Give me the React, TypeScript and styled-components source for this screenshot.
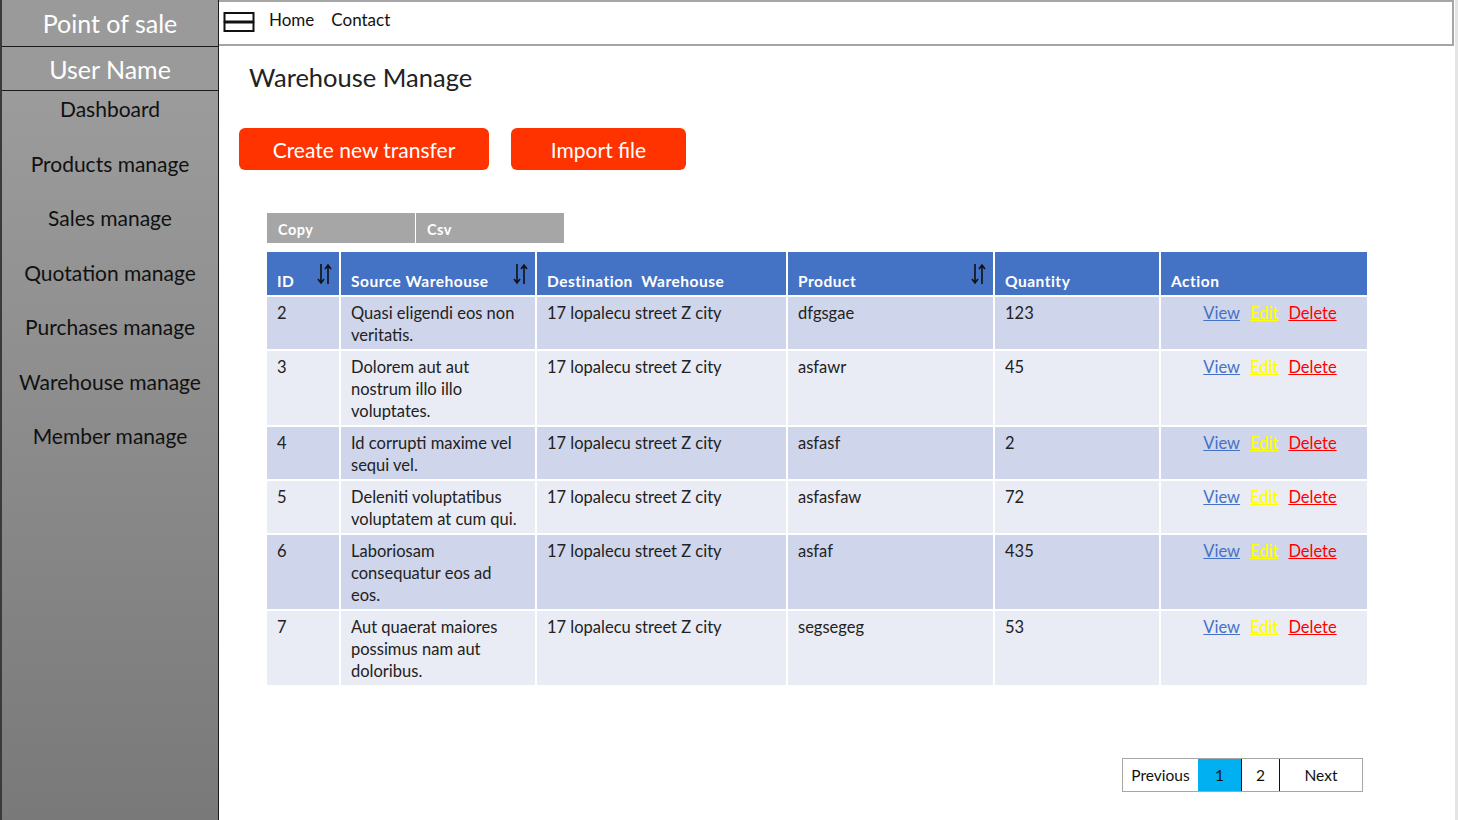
import React from 'react';
import styled, { createGlobalStyle } from 'styled-components';

const GlobalStyle = createGlobalStyle`
  html, body { margin: 0; padding: 0; }
  body { font-family: Lato, "Open Sans", "Liberation Sans", sans-serif; background: #fff; }
`;

const Page = styled.div`
  display: flex;
  height: 820px;
  width: 1458px;
  overflow: hidden;
`;

const Sidebar = styled.aside`
  width: 216px;
  flex: none;
  border-left: 2px solid #3a3a3a;
  border-right: 1px solid #1a1a1a;
  background: linear-gradient(#a0a0a0, #797979);
  display: flex;
  flex-direction: column;
`;

const SideHead = styled.div<{ h: number }>`
  height: ${p => p.h}px;
  border-bottom: 1px solid #1a1a1a;
  color: #fff;
  font-size: 25px;
  display: flex;
  align-items: center;
  justify-content: center;
  background: #9a9a9a;
`;

const MenuItem = styled.div`
  height: 54.5px;
  padding-top: 6px;
  box-sizing: border-box;
  text-align: center;
  font-size: 21px;
  line-height: 24px;
  color: #111;
`;

const Main = styled.main`
  flex: 1;
  display: flex;
  flex-direction: column;
  border-right: 3px solid #e4e4e4;
`;

const TopBar = styled.header`
  border: 2px solid #a6a6a6;
  border-left: none;
  margin-right: 1px;
  display: flex;
  align-items: flex-start;
  padding: 8px 0 0 4px;
  height: 34px;
`;

const NavLink = styled.a`
  font-size: 17px;
  color: #111;
  margin-left: 17px;
  line-height: 20px;
  &:first-of-type { margin-left: 14px; }
`;

const Content = styled.div`
  padding: 16px 0 0 20px;
  display: flex;
  flex-direction: column;
`;

const Title = styled.h1`
  font-weight: 400;
  font-size: 25.5px;
  color: #222;
  margin: 0 0 0 10px;
  line-height: 30px;
`;

const ButtonRow = styled.div`
  display: flex;
  gap: 22px;
  margin-top: 36px;
`;

const RedButton = styled.button<{ w: number }>`
  width: ${p => p.w}px;
  height: 42px;
  background: #ff3300;
  color: #fff;
  border: none;
  border-radius: 6px;
  font-family: inherit;
  font-size: 21px;
  padding: 0;
`;

const TableWrap = styled.div`
  margin: 43px 0 0 28px;
  width: 1102px;
`;

const ExportRow = styled.div`
  display: flex;
  gap: 1px;
  margin-bottom: 9px;
`;

const ExportBtn = styled.div`
  width: 148px;
  height: 30px;
  background: #a6a6a6;
  color: #fff;
  font-weight: 700;
  font-size: 14.5px;
  letter-spacing: 0.5px;
  padding: 8px 0 0 11px;
  box-sizing: border-box;
`;

const Table = styled.table`
  border-collapse: collapse;
  width: 1102px;
  margin-left: -2px;
  table-layout: fixed;
`;

const Th = styled.th<{ w: number }>`
  box-sizing: border-box;
  width: ${p => p.w}px;
  height: 44px;
  background: #4472c4;
  color: #fff;
  font-weight: 700;
  font-size: 15.5px;
  letter-spacing: 0.5px;
  text-align: left;
  vertical-align: bottom;
  padding: 0 6px 5px 10px;
  border: 2px solid #fff;
  border-top: none;
  position: relative;
  white-space: nowrap;
`;

const SortIcon = styled.svg`
  position: absolute;
  right: 6px;
  top: 10px;
`;

const Tr = styled.tr<{ odd: boolean }>`
  background: ${p => (p.odd ? '#cfd5ea' : '#e9ebf5')};
`;

const Td = styled.td`
  border: 2px solid #fff;
  vertical-align: top;
  padding: 5px 14px 3px 10px;
  font-size: 16.5px;
  line-height: 22px;
  color: #222;
`;

const ActionCell = styled(Td)`
  text-align: center;
  padding: 5px 8px 3px 20px;
`;

const Act = styled.a<{ c: string }>`
  color: ${p => p.c};
  text-decoration: underline;
  margin: 0 5px;
`;

const Pager = styled.div`
  display: flex;
  align-self: flex-end;
  margin: 71px 92px 0 0;
  border: 1px solid #a6a6a6;
  height: 32px;
`;

const PageBtn = styled.div<{ w: number; active?: boolean; divide?: boolean }>`
  width: ${p => p.w}px;
  display: flex;
  align-items: center;
  justify-content: center;
  font-size: 15.5px;
  color: #111;
  background: ${p => (p.active ? '#00b0f0' : '#fff')};
  border-left: ${p => (p.divide ? '1px solid #111' : 'none')};
`;

const Sort = () => (
  <SortIcon width="16" height="24" viewBox="0 0 16 24">
    <path d="M4 2 V21 M1 17 L4 21 L7 17" stroke="#111" strokeWidth="1.6" fill="none" />
    <path d="M11 22 V3 M8 7 L11 3 L14 7" stroke="#111" strokeWidth="1.6" fill="none" />
  </SortIcon>
);

const Burger = () => (
  <svg width="32" height="24" viewBox="0 0 32 24">
    <rect x="1.5" y="3" width="29" height="8.5" fill="none" stroke="#111" strokeWidth="2" />
    <rect x="1.5" y="12.5" width="29" height="8.5" fill="none" stroke="#111" strokeWidth="2" />
  </svg>
);

const menu = ['Dashboard', 'Products manage', 'Sales manage', 'Quotation manage', 'Purchases manage', 'Warehouse manage', 'Member manage'];

const rows = [
  { id: 2, src: 'Quasi eligendi  eos non veritatis.', product: 'dfgsgae', qty: 123 },
  { id: 3, src: 'Dolorem aut aut nostrum illo illo voluptates.', product: 'asfawr', qty: 45 },
  { id: 4, src: 'Id corrupti maxime vel sequi vel.', product: 'asfasf', qty: 2 },
  { id: 5, src: 'Deleniti voluptatibus voluptatem at cum qui.', product: 'asfasfaw', qty: 72 },
  { id: 6, src: 'Laboriosam consequatur eos ad eos.', product: 'asfaf', qty: 435 },
  { id: 7, src: 'Aut quaerat maiores possimus nam aut doloribus.', product: 'segsegeg', qty: 53 },
];

export default function App() {
  return (
    <>
      <GlobalStyle />
      <Page>
        <Sidebar>
          <SideHead h={46}>Point of sale</SideHead>
          <SideHead h={43}>User Name</SideHead>
          {menu.map(m => (
            <MenuItem key={m}>{m}</MenuItem>
          ))}
        </Sidebar>
        <Main>
          <TopBar>
            <Burger />
            <NavLink>Home</NavLink>
            <NavLink>Contact</NavLink>
          </TopBar>
          <Content>
            <Title>Warehouse Manage</Title>
            <ButtonRow>
              <RedButton w={250}>Create new transfer</RedButton>
              <RedButton w={175}>Import file</RedButton>
            </ButtonRow>
            <TableWrap>
              <ExportRow>
                <ExportBtn>Copy</ExportBtn>
                <ExportBtn>Csv</ExportBtn>
              </ExportRow>
              <Table>
                <thead>
                  <tr>
                    <Th w={74}>ID<Sort /></Th>
                    <Th w={196}>Source Warehouse<Sort /></Th>
                    <Th w={251}>Destination&nbsp; Warehouse</Th>
                    <Th w={207}>Product<Sort /></Th>
                    <Th w={166}>Quantity</Th>
                    <Th w={208}>Action</Th>
                  </tr>
                </thead>
                <tbody>
                  {rows.map((r, i) => (
                    <Tr key={r.id} odd={i % 2 === 0}>
                      <Td>{r.id}</Td>
                      <Td>{r.src}</Td>
                      <Td>17 lopalecu street Z city</Td>
                      <Td>{r.product}</Td>
                      <Td>{r.qty}</Td>
                      <ActionCell>
                        <Act c="#4472c4">View</Act>
                        <Act c="#ffff00">Edit</Act>
                        <Act c="#ff0000">Delete</Act>
                      </ActionCell>
                    </Tr>
                  ))}
                </tbody>
              </Table>
            </TableWrap>
            <Pager>
              <PageBtn w={75}>Previous</PageBtn>
              <PageBtn w={43} active>1</PageBtn>
              <PageBtn w={37} divide>2</PageBtn>
              <PageBtn w={82} divide>Next</PageBtn>
            </Pager>
          </Content>
        </Main>
      </Page>
    </>
  );
}
